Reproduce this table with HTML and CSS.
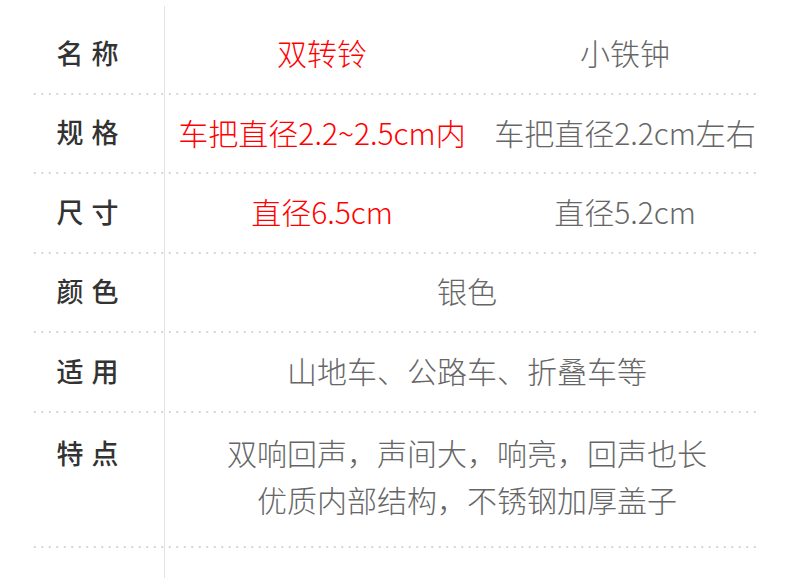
FILE: index.html
```html
<!DOCTYPE html>
<html lang="zh-CN">
  <head>
    <meta charset="UTF-8" />
    <meta name="viewport" content="width=device-width, initial-scale=1.0" />
    <title>双转铃 参数</title>
    <link rel="stylesheet" href="styles.css">
  </head>
  <body>
    <div class="sheet">
      <div class="row">
        <div class="label">名 称</div>
        <div class="value hot">双转铃</div>
        <div class="value">小铁钟</div>
      </div>
      <div class="rule"></div>
      <div class="row">
        <div class="label">规 格</div>
        <div class="value hot">车把直径2.2~2.5cm内</div>
        <div class="value">车把直径2.2cm左右</div>
      </div>
      <div class="rule"></div>
      <div class="row">
        <div class="label">尺 寸</div>
        <div class="value hot">直径6.5cm</div>
        <div class="value">直径5.2cm</div>
      </div>
      <div class="rule"></div>
      <div class="row">
        <div class="label">颜 色</div>
        <div class="value wide">银色</div>
      </div>
      <div class="rule"></div>
      <div class="row">
        <div class="label">适 用</div>
        <div class="value wide">山地车、公路车、折叠车等</div>
      </div>
      <div class="rule"></div>
      <div class="row tall">
        <div class="label">特 点</div>
        <div class="value wide">双响回声，声间大，响亮，回声也长<br />优质内部结构，不锈钢加厚盖子</div>
      </div>
      <div class="rule"></div>
    </div>
  </body>
</html>
```

FILE: styles.css
```css
/* spec sheet */
body {
  margin: 0;
  background-color: #fff;
  font-family: "Noto Sans CJK SC", "Noto Sans", sans-serif;
}

.sheet {
  width: 790px;
  height: 572px;
  margin-top: 6px;
  padding-top: 9px;
  box-sizing: border-box;
  /* column divider */
  background: linear-gradient(#e3e3e3, #e3e3e3) no-repeat 164px 0 / 1px 100%;
}

.row {
  display: grid;
  grid-template-columns: 164px 316px 290px;
  align-items: center;
  height: 77.5px;
  padding-bottom: 3px;
  box-sizing: border-box;
}

.row.tall {
  align-items: start;
  height: 133px;
  padding-top: 16px;
  padding-bottom: 0;
}

.label {
  padding-left: 12px;
  text-align: center;
  font-size: 27px;
  font-weight: 500;
  color: #333;
  letter-spacing: 1px;
}

.tall .label {
  line-height: 47px;
}

.value {
  text-align: center;
  font-size: 30px;
  font-weight: 300;
  color: #666;
  white-space: nowrap;
}

.value.hot {
  color: #f00;
}

.value.wide {
  grid-column: 2 / 4;
  line-height: 47px;
}

.rule {
  height: 2px;
  margin: 0 31px;
  background: radial-gradient(circle, #d4d4d4 0.8px, transparent 1px) repeat-x 0 0 / 7.5px 2px;
}
```
